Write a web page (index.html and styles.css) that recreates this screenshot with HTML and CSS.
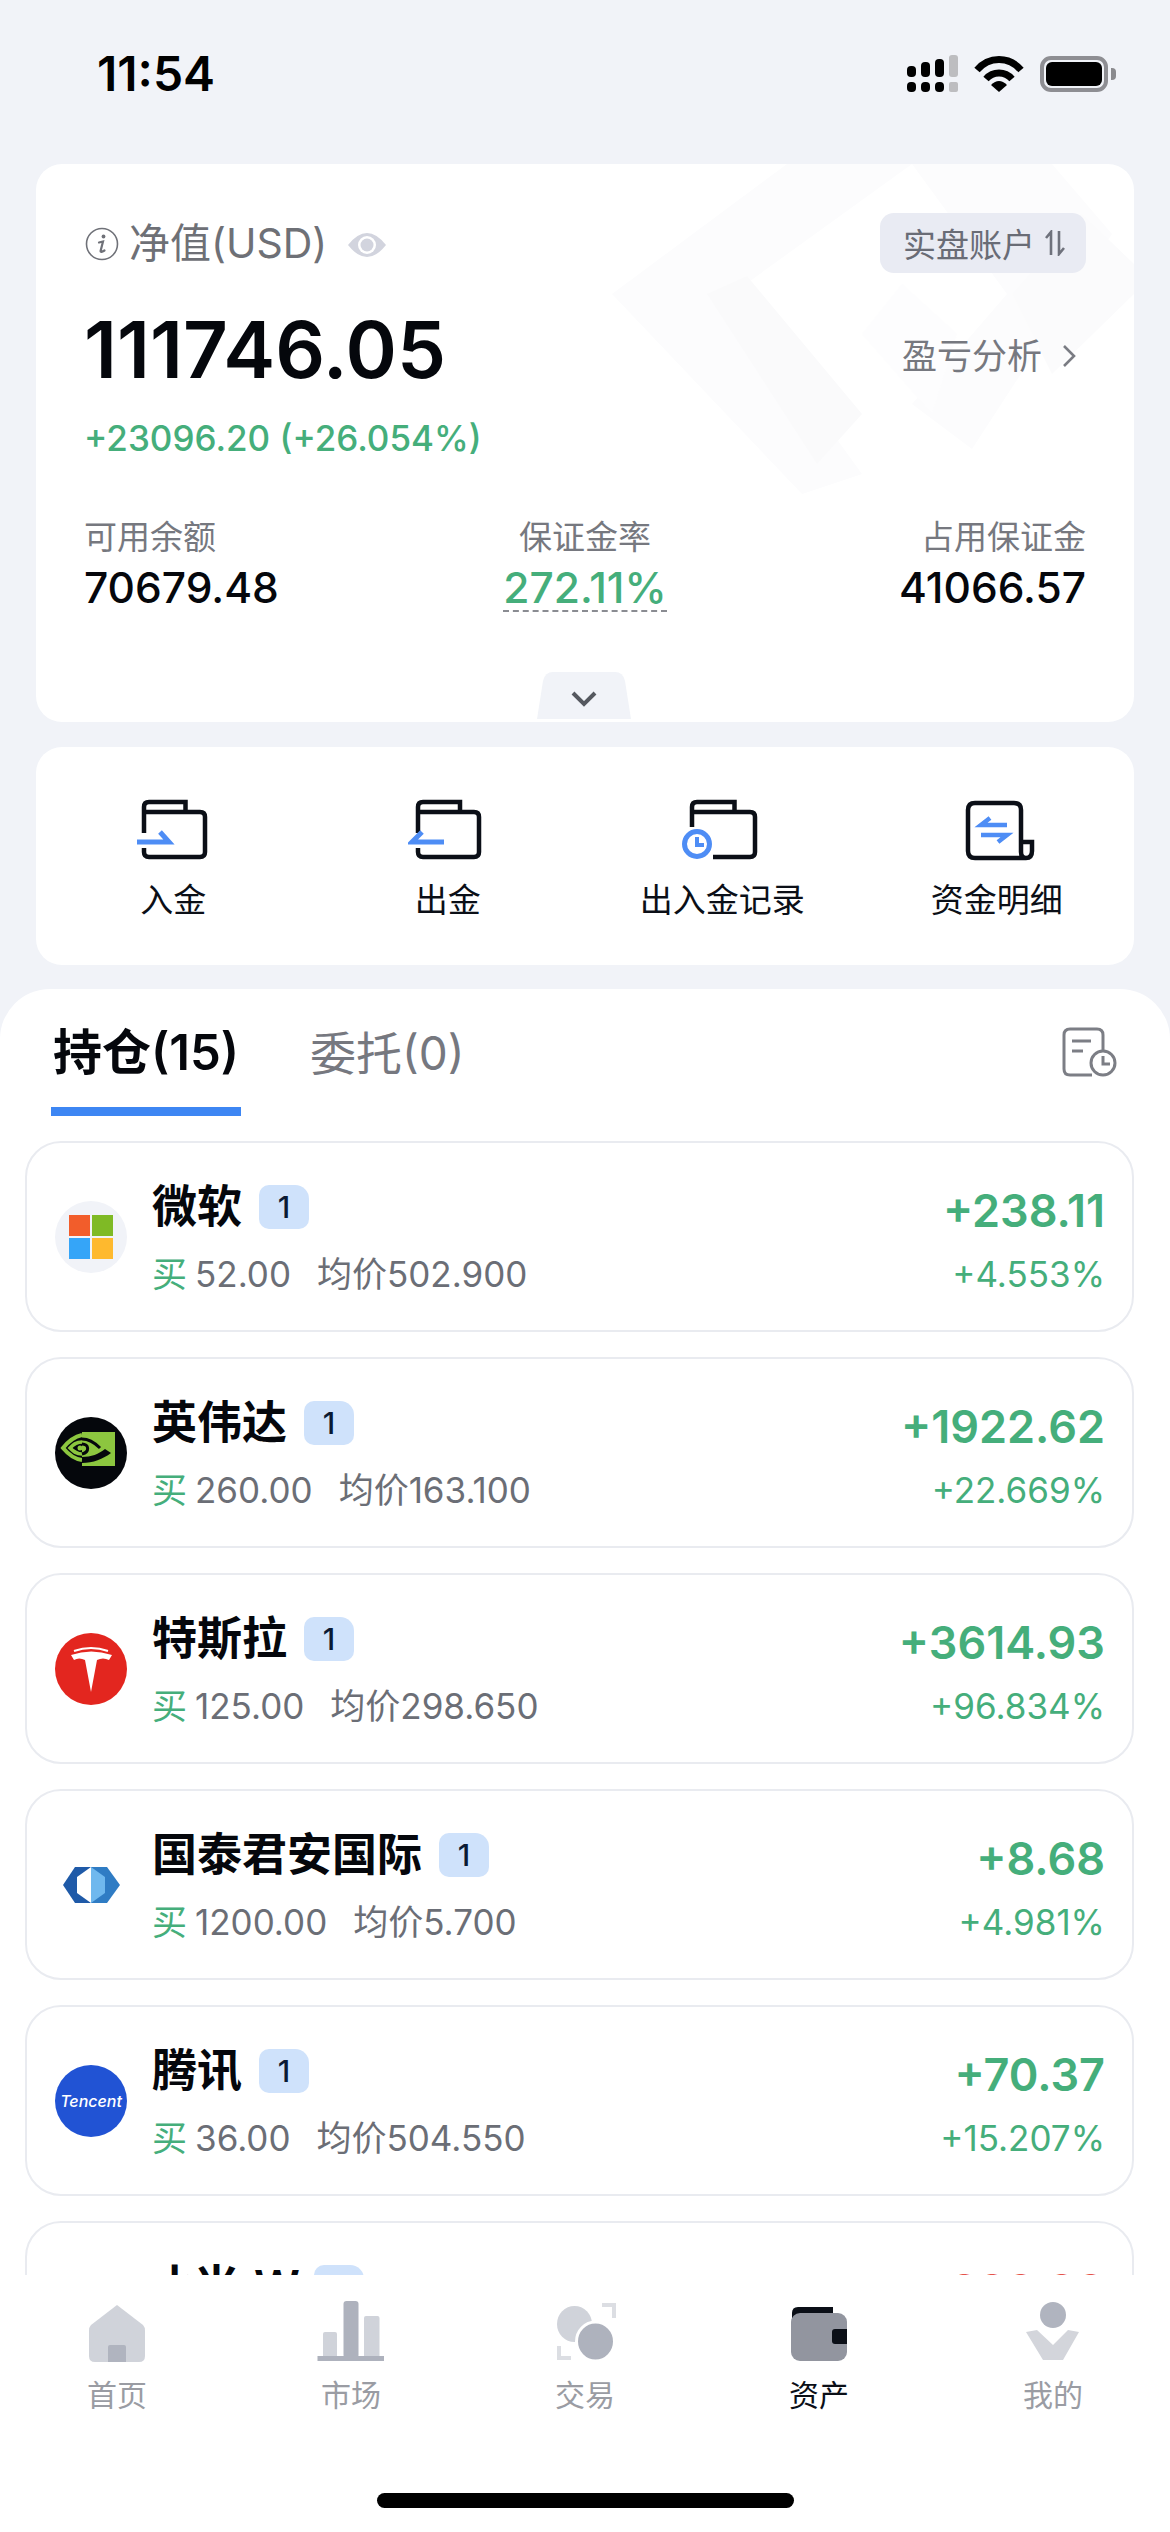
FILE: index.html
```html
<!DOCTYPE html>
<html lang="zh-CN">
<head>
<meta charset="utf-8">
<title>资产</title>
<link rel="stylesheet" href="styles.css">
</head>
<body>
<div class="phone">
  <header class="status">
    <span class="time">11:54</span>
    <div class="status-icons">
      <svg class="ic-signal" width="52" height="38" viewBox="0 0 52 38">
        <g fill="#000">
          <rect x="0" y="11" width="9" height="11" rx="4"/><rect x="14" y="7" width="9" height="15" rx="4"/><rect x="28" y="4" width="9" height="18" rx="4"/>
          <rect x="0" y="27" width="9" height="10" rx="4"/><rect x="14" y="27" width="9" height="10" rx="4"/><rect x="28" y="27" width="9" height="10" rx="4"/>
        </g>
        <rect x="42" y="0" width="9" height="22" rx="3" fill="#bdbdc0"/><rect x="42" y="27" width="9" height="10" rx="2" fill="#bdbdc0"/>
      </svg>
      <svg class="ic-wifi" width="50" height="38" viewBox="0 0 50 38">
        <path d="M3 15C15 1 35 1 47 15" fill="none" stroke="#000" stroke-width="7"/>
        <path d="M12 24C19 16 31 16 38 24" fill="none" stroke="#000" stroke-width="7"/>
        <path d="M17 30Q25 22 33 30L25 37Z" fill="#000"/>
      </svg>
      <div class="battery"><span class="battery-fill"></span></div>
      <span class="battery-nub"></span>
    </div>
  </header>

  <section class="card summary">
    <svg class="watermark" width="522" height="330" viewBox="0 0 522 330">
      <path d="M0 130L175 0H300L120 130L250 310L190 330Z" fill="#fcfcfd"/>
      <path d="M95 130L135 112L250 250L205 300Z" fill="#fafafb"/>
      <path d="M300 0H440L500 70L360 285L300 240L395 130Z" fill="#fcfcfd"/>
      <path d="M290 120L345 170L320 250L250 170Z" fill="#fdfdfe"/>
      <path d="M400 130L470 50L522 100V130L440 210Z" fill="#fbfbfc"/>
    </svg>
    <div class="head-row">
      <div class="title">
        <svg class="ic-info" width="34" height="34" viewBox="0 0 34 34">
          <circle cx="17" cy="17" r="15.5" fill="none" stroke="#6f7178" stroke-width="1.6"/>
          <circle cx="18.5" cy="9.5" r="1.9" fill="#6f7178"/>
          <path d="M14 15.5L18 14.5L15.6 24Q15.5 26 19.5 23.5" fill="none" stroke="#6f7178" stroke-width="2.2" stroke-linecap="round"/>
        </svg>
        <span class="title-text">净值(USD)</span>
        <svg class="ic-eye" width="40" height="30" viewBox="0 0 40 30">
          <path d="M1 15Q20 -9 39 15Q20 39 1 15Z" fill="#d2d4de"/>
          <circle cx="20" cy="15" r="9" fill="#fff"/>
          <circle cx="20" cy="15" r="6.5" fill="#d2d4de"/>
        </svg>
      </div>
      <div class="account">
        <span>实盘账户</span>
        <svg width="20" height="26" viewBox="0 0 20 26">
          <path d="M6 25V2L1 8" fill="none" stroke="#6f727c" stroke-width="2.6"/>
          <path d="M14 1V24L19 18" fill="none" stroke="#6f727c" stroke-width="2.6"/>
        </svg>
      </div>
    </div>
    <div class="main-row">
      <div class="equity">111746.05</div>
      <div class="analysis">
        <span>盈亏分析</span>
        <svg width="14" height="24" viewBox="0 0 14 24"><path d="M2 2L12 12L2 22" fill="none" stroke="#7a7c83" stroke-width="2.6"/></svg>
      </div>
    </div>
    <div class="gain">+23096.20 (+26.054%)</div>
    <div class="stats">
      <div class="stat">
        <div class="stat-label">可用余额</div>
        <div class="stat-value">70679.48</div>
      </div>
      <div class="stat stat-center">
        <div class="stat-label">保证金率</div>
        <div class="stat-value rate">272.11%</div>
      </div>
      <div class="stat stat-right">
        <div class="stat-label">占用保证金</div>
        <div class="stat-value">41066.57</div>
      </div>
    </div>
    <div class="expand">
      <svg width="94" height="48" viewBox="0 0 94 48">
        <path d="M0 48L6 10Q8 1 16 1H78Q86 1 88 10L94 48Z" fill="#f1f3f8"/>
        <path d="M36 22L47 33L58 22" fill="none" stroke="#55585f" stroke-width="4"/>
      </svg>
    </div>
  </section>

  <section class="card actions">
    <div class="action">
      <svg width="80" height="70" viewBox="0 0 80 70" fill="none" stroke-width="4.500">
        <path d="M11 38V12Q11 7 16 7H52.500V17M11 17H67Q72 17 72 22V57Q72 62 67 62H16Q11 62 11 57V53" stroke="#0b0f17"/>
        <path d="M4 47H36L27 37" stroke="#4e8df5" stroke-width="5"/>
      </svg>
      <span>入金</span>
    </div>
    <div class="action">
      <svg width="80" height="70" viewBox="0 0 80 70" fill="none" stroke-width="4.500">
        <path d="M10 38V12Q10 7 15 7H52V17M10 17H66Q71 17 71 22V57Q71 62 66 62H15Q10 62 10 57V53" stroke="#0b0f17"/>
        <path d="M36 47H4L14 37" stroke="#4e8df5" stroke-width="5"/>
      </svg>
      <span>出金</span>
    </div>
    <div class="action">
      <svg width="80" height="70" viewBox="0 0 80 70" fill="none" stroke-width="4.500">
        <path d="M10 32V12Q10 7 15 7H52.500V17M10 17H68Q73 17 73 22V57Q73 62 68 62H31" stroke="#0b0f17"/>
        <circle cx="15" cy="49" r="12.500" stroke="#4e8df5" stroke-width="5"/>
        <path d="M15 42V50H22" stroke="#4e8df5" stroke-width="4"/>
      </svg>
      <span>出入金记录</span>
    </div>
    <div class="action">
      <svg width="80" height="70" viewBox="0 0 80 70" fill="none" stroke-width="4.500">
        <path d="M64 47H75V56Q75 63 69 63H18Q11 63 11 56V15Q11 8 18 8H57Q64 8 64 15V57Q64 63 69 63" stroke="#0b0f17"/>
        <path d="M50 30H24L33 23M24 40H50L41 47" stroke="#4e8df5" stroke-width="4.500"/>
      </svg>
      <span>资金明细</span>
    </div>
  </section>

  <section class="sheet">
    <div class="tabs">
      <div class="tab tab-active">持仓(15)</div>
      <div class="tab">委托(0)</div>
      <svg class="ic-history" width="56" height="50" viewBox="0 0 56 50" fill="none" stroke="#7c7e85" stroke-width="3">
        <path d="M31 48H9Q3 48 3 42V8Q3 2 9 2H36Q42 2 42 8V23"/>
        <path d="M11 14H30M11 24H22"/>
        <circle cx="42" cy="36" r="12"/>
        <path d="M42 29V37H49"/>
      </svg>
    </div>
    <div class="list">
      <article class="row">
        <div class="logo logo-ms"><svg width="44" height="44" viewBox="0 0 44 44"><rect width="21" height="21" fill="#f25d2b"/><rect x="23" width="21" height="21" fill="#7fba25"/><rect y="23" width="21" height="21" fill="#35a5f8"/><rect x="23" y="23" width="21" height="21" fill="#feb92e"/></svg></div>
        <div class="info">
          <div class="name-line"><span class="name">微软</span><span class="badge">1</span></div>
          <div class="sub"><span class="buy">买</span><span class="qty">52.00</span><span>均价502.900</span></div>
        </div>
        <div class="pnl"><div class="pnl-value">+238.11</div><div class="pnl-rate">+4.553%</div></div>
      </article>
      <article class="row">
        <div class="logo"><svg width="72" height="72" viewBox="0 0 72 72">
          <circle cx="36" cy="36" r="36" fill="#05070c"/>
          <rect x="27" y="15" width="33" height="34" fill="#8cc63f"/>
          <g fill="none">
            <path d="M27 18C18 20 12 26 8 31C13 37 19 42 27 43" stroke="#8cc63f" stroke-width="4"/>
            <path d="M27 25C21 25 18 28 15 31C18 34 21 37 27 37" stroke="#8cc63f" stroke-width="3.500"/>
            <path d="M27 22C35 22 40 26 45 31" stroke="#05070c" stroke-width="3"/>
            <path d="M27 27C34 27 35 35 27 37" stroke="#05070c" stroke-width="3"/>
          </g>
          <circle cx="25" cy="31" r="2.500" fill="#8cc63f"/>
          <path d="M27 46C38 46 48 42 56 36L50 32C44 37 36 40 27 40Z" fill="#05070c"/>
        </svg></div>
        <div class="info">
          <div class="name-line"><span class="name">英伟达</span><span class="badge">1</span></div>
          <div class="sub"><span class="buy">买</span><span class="qty">260.00</span><span>均价163.100</span></div>
        </div>
        <div class="pnl"><div class="pnl-value">+1922.62</div><div class="pnl-rate">+22.669%</div></div>
      </article>
      <article class="row">
        <div class="logo"><svg width="72" height="72" viewBox="0 0 72 72">
          <circle cx="36" cy="36" r="36" fill="#e3261f"/>
          <path d="M36 59L30 27Q24 24 19 27L16 22Q36 15 57 22L54 27Q48 24 42 27Z" fill="#fff"/>
          <path d="M19 18Q36 12 53 18" fill="none" stroke="#fff" stroke-width="2"/>
        </svg></div>
        <div class="info">
          <div class="name-line"><span class="name">特斯拉</span><span class="badge">1</span></div>
          <div class="sub"><span class="buy">买</span><span class="qty">125.00</span><span>均价298.650</span></div>
        </div>
        <div class="pnl"><div class="pnl-value">+3614.93</div><div class="pnl-rate">+96.834%</div></div>
      </article>
      <article class="row">
        <div class="logo"><svg width="72" height="72" viewBox="0 0 72 72">
          <path d="M36 18H20L8 36L20 54H36Z" fill="#1f5aa8"/>
          <path d="M36 18H52L65 36L52 54H36Z" fill="#2f7cc4"/>
          <path d="M36 18L22 28V44L36 54Z" fill="#fff"/>
          <path d="M36 18L50 28V44L36 54Z" fill="#6fb8ee"/>
        </svg></div>
        <div class="info">
          <div class="name-line"><span class="name">国泰君安国际</span><span class="badge">1</span></div>
          <div class="sub"><span class="buy">买</span><span class="qty">1200.00</span><span>均价5.700</span></div>
        </div>
        <div class="pnl"><div class="pnl-value">+8.68</div><div class="pnl-rate">+4.981%</div></div>
      </article>
      <article class="row">
        <div class="logo logo-tencent"><span>Tencent</span></div>
        <div class="info">
          <div class="name-line"><span class="name">腾讯</span><span class="badge">1</span></div>
          <div class="sub"><span class="buy">买</span><span class="qty">36.00</span><span>均价504.550</span></div>
        </div>
        <div class="pnl"><div class="pnl-value">+70.37</div><div class="pnl-rate">+15.207%</div></div>
      </article>
      <article class="row">
        <div class="logo logo-ms"></div>
        <div class="info">
          <div class="name-line"><span class="name name-tight">小米-W</span><span class="badge">1</span></div>
          <div class="sub"><span class="sell">卖</span><span class="qty">100.00</span><span>均价50.000</span></div>
        </div>
        <div class="pnl"><div class="pnl-value loss">-228.88</div><div class="pnl-rate loss">-4.578%</div></div>
      </article>
    </div>
  </section>

  <nav class="nav">
    <div class="nav-items">
      <div class="nav-item">
        <svg width="76" height="64" viewBox="0 0 76 64"><path d="M38 5L64 25Q66 27 66 31V56Q66 62 60 62H16Q10 62 10 56V31Q10 27 12 25Z" fill="#d0d3da"/><path d="M29 47Q29 45 31 45H45Q47 45 47 47V62H29Z" fill="#b0b4bf"/></svg>
        <span>首页</span>
      </div>
      <div class="nav-item">
        <svg width="76" height="64" viewBox="0 0 76 64"><rect x="10" y="32" width="14" height="26" rx="2" fill="#d0d3da"/><rect x="51" y="16" width="15.500" height="42" rx="2" fill="#d0d3da"/><rect x="30.500" y="1" width="15" height="57" rx="3" fill="#aeb2bd"/><rect x="4.500" y="56" width="66.500" height="5" fill="#aeb2bd"/></svg>
        <span>市场</span>
      </div>
      <div class="nav-item">
        <svg width="76" height="64" viewBox="0 0 76 64"><ellipse cx="27.500" cy="24" rx="17.500" ry="18" fill="#d0d3da"/><ellipse cx="48.500" cy="41.500" rx="19" ry="19.500" fill="#aeb2bd" stroke="#fff" stroke-width="3"/><path d="M55 5H67V18M12 46V58H24" fill="none" stroke="#dcdee3" stroke-width="4"/></svg>
        <span>交易</span>
      </div>
      <div class="nav-item nav-active">
        <svg width="76" height="64" viewBox="0 0 76 64"><path d="M11 20V13Q11 7 17 7H52V20Z" fill="#0b0f17"/><rect x="10" y="13" width="56" height="48" rx="9" fill="#92959f"/><path d="M66 29H54Q51 29 51 32V41Q51 44 54 44H66Z" fill="#0b0f17"/></svg>
        <span>资产</span>
      </div>
      <div class="nav-item">
        <svg width="76" height="64" viewBox="0 0 76 64"><circle cx="38" cy="15" r="13" fill="#b0b4bf"/><path d="M11 32L22 30L38 45L53 30L64 32L48 60H28Z" fill="#d3d5db"/></svg>
        <span>我的</span>
      </div>
    </div>
    <div class="home-indicator"></div>
  </nav>
</div>
</body>
</html>
```
FILE: styles.css
```css
* { box-sizing: border-box; }
html, body { margin: 0; padding: 0; }
body {
  width: 1170px;
  height: 2532px;
  overflow: hidden;
  background: #f1f3f8;
  font-family: Inter, "Noto Sans CJK SC", sans-serif;
  color: #0b0f17;
}
.phone { display: flex; flex-direction: column; height: 2532px; }

.status {
  height: 164px;
  flex: none;
  display: flex;
  justify-content: space-between;
  align-items: flex-start;
  padding: 44px 54px 0 97px;
}
.time { font-size: 48px; line-height: 60px; font-weight: 600; color: #000; }
.status-icons { display: flex; align-items: center; padding-top: 11px; }
.ic-signal { margin-right: 15px; }
.ic-wifi { margin-right: 16px; }
.battery {
  width: 68px; height: 36px; border: 4px solid #8e8e93; border-radius: 11px;
  padding: 2px; display: flex;
}
.battery-fill { flex: 1; background: #000; border-radius: 6px; }
.battery-nub { width: 5px; height: 12px; background: #8a8a8e; border-radius: 0 4px 4px 0; margin-left: 3px; }

.card { background: #fff; border-radius: 26px; margin: 0 36px; flex: none; }

.summary { position: relative; height: 558px; padding: 49px 48px 0; overflow: hidden; }
.watermark { position: absolute; right: 0; top: 0; }
.head-row, .main-row, .gain, .stats { position: relative; }
.head-row { display: flex; justify-content: space-between; align-items: center; height: 60px; }
.title { display: flex; align-items: center; margin-left: 1px; }
.ic-info { margin-right: 10px; margin-top: 2px; }
.title-text { font-size: 41px; line-height: 50px; color: #6e7076; }
.ic-eye { margin-left: 20px; margin-top: 4px; }
.account {
  width: 206px; height: 60px; background: #e9ebf3; border-radius: 14px;
  display: flex; align-items: center; padding-left: 23px; gap: 10px;
  font-size: 33px; color: #696c76;
}
.main-row { display: flex; justify-content: space-between; align-items: center; height: 90px; margin-top: 32px; }
.equity { font-size: 78px; line-height: 90px; font-weight: 600; color: #05070c; }
.analysis { display: flex; align-items: center; gap: 20px; font-size: 35px; line-height: 50px; color: #76787f; margin-top: 12px; padding-right: 10px; }
.gain { font-size: 35px; line-height: 46px; font-weight: 500; color: #45ae7b; margin-top: 20px; }
.stats { display: flex; justify-content: space-between; margin-top: 54px; }
.stat { width: 33%; }
.stat-center { text-align: center; }
.stat-right { text-align: right; }
.stat-label { font-size: 33px; line-height: 44px; color: #76787f; }
.stat-value { font-size: 42.5px; line-height: 50px; font-weight: 500; margin-top: 4px; color: #05070c; }
.rate { color: #45ae7b; display: inline-block; line-height: 44px; margin-top: 7px; border-bottom: 2px dashed #8a8c92; }
.expand { position: absolute; left: 501px; bottom: 3px; height: 48px; display: flex; }

.actions { margin-top: 25px; height: 218px; display: grid; grid-template-columns: repeat(4, 1fr); padding-top: 48px; }
.action { display: flex; flex-direction: column; align-items: center; font-size: 33px; line-height: 44px; color: #0b0f17; }
.action span { margin-top: 13px; }

.sheet { margin-top: 24px; height: 1286px; flex: none; background: #fff; border-radius: 50px 50px 0 0; overflow: hidden; }
.tabs { display: flex; height: 127px; padding-left: 51px; position: relative; }
.tab { height: 127px; padding-top: 40px; font-size: 46px; line-height: 48px; color: #76787f; }
.tab + .tab { margin-left: 69px; }
.tab-active { width: 190px; text-align: center; font-size: 49px; color: #05070c; font-weight: 600; border-bottom: 9px solid #3d86f3; white-space: nowrap; }
.ic-history { margin-left: auto; margin-right: 53px; margin-top: 38px; }

.list { display: flex; flex-direction: column; gap: 25px; padding: 25px 36px 0 25px; }
.row {
  height: 191px; flex: none; display: flex; align-items: center;
  border: 2px solid #e9ebf0; border-radius: 36px; padding: 0 27px 0 28px;
}
.logo { width: 72px; height: 72px; flex: none; border-radius: 50%; display: flex; align-items: center; justify-content: center; }
.logo-ms { background: #f1f3f8; }
.logo-tencent { background: #2153d4; }
.logo-tencent span { color: #fff; font-size: 16px; font-weight: 500; font-style: italic; }
.info { margin-left: 25px; align-self: flex-start; padding-top: 39px; flex: 1; }
.name-line { display: flex; align-items: center; height: 50px; }
.name { font-size: 45px; line-height: 50px; font-weight: 600; color: #05070c; }
.name-tight { letter-spacing: -3px; }
.badge {
  width: 50px; height: 44px; margin-left: 17px; background: #cfe2fb; color: #0b1a33;
  border-radius: 10px 14px 10px 10px; text-align: center; font-size: 30px; line-height: 44px; font-weight: 500;
}
.sub { display: flex; margin-top: 20px; font-size: 35px; line-height: 44px; color: #6b6e76; }
.buy { color: #45ae7b; margin-right: 8px; }
.sell { color: #e5524a; margin-right: 8px; }
.qty { margin-right: 26px; }
.pnl { align-self: flex-start; text-align: right; padding-top: 43px; }
.pnl-value { font-size: 45px; line-height: 50px; font-weight: 600; color: #45ae7b; }
.pnl-rate { font-size: 35px; line-height: 44px; margin-top: 16px; color: #45ae7b; }
.loss { color: #e5524a; }

.nav { flex: 1; background: #fff; position: relative; display: flex; flex-direction: column; }
.nav-items { display: grid; grid-template-columns: repeat(5, 1fr); padding-top: 25px; }
.nav-item { display: flex; flex-direction: column; align-items: center; font-size: 30px; line-height: 40px; color: #9a9ca3; }
.nav-item span { margin-top: 11px; }
.nav-active { color: #0b0f17; }
.home-indicator { width: 417px; height: 15px; background: #000; border-radius: 8px; margin: 78px auto 0; }
```
